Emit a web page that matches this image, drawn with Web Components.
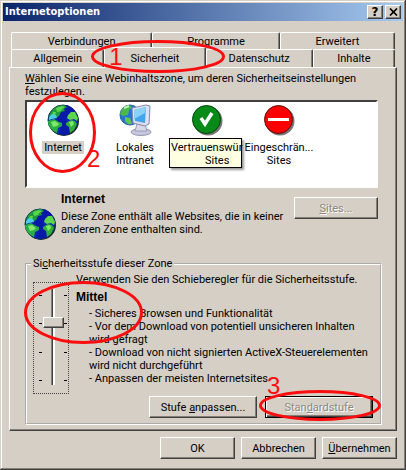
<!DOCTYPE html>
<html lang="de">
<head>
<meta charset="utf-8">
<title>Internetoptionen</title>
<style>
  body {
    margin: 0;
    --face: #d5cfc6;
    --light: #ffffff;
    --shadow: #848078;
    --dark: #404040;
    font: 11px/13px Roboto, "Liberation Sans", sans-serif;
    color: #000;
  }
</style>
</head>
<body>
<dialog-window heading="Internetoptionen">
  <tab-row>
    <tab-item style="--grow: 141">Verbindungen</tab-item>
    <tab-item style="--grow: 127">Programme</tab-item>
    <tab-item style="--grow: 115">Erweitert</tab-item>
  </tab-row>
  <tab-row>
    <tab-item style="--grow: 93">Allgemein</tab-item>
    <tab-item style="--grow: 101" selected>Sicherheit<ring-mark slot="mark" x="-13" y="-7" w="134" h="33" n="1" nx="4" ny="17"></ring-mark></tab-item>
    <tab-item style="--grow: 107">Datenschutz</tab-item>
    <tab-item style="--grow: 82">Inhalte</tab-item>
  </tab-row>
  <security-page></security-page>
  <push-button slot="actions">OK</push-button>
  <push-button slot="actions">Abbrechen</push-button>
  <push-button slot="actions"><u>Ü</u>bernehmen</push-button>
</dialog-window>

<script>
class DialogWindow extends HTMLElement {
  constructor() {
    super();
    this.attachShadow({ mode: "open" });
  }

  connectedCallback() {
    this.shadowRoot.innerHTML = `
      <style>
        :host {
          display: flex;
          flex-direction: column;
          box-sizing: border-box;
          min-height: 100vh;
          padding: 3px;
          background: var(--face);
          box-shadow: inset -1px -1px var(--dark), inset 1px 1px var(--face),
            inset -2px -2px var(--shadow), inset 2px 2px var(--light);
        }
        header {
          display: flex;
          align-items: center;
          gap: 2px;
          height: 18px;
          padding: 0 2px;
          background: linear-gradient(90deg, #0a246a, #a6caf0);
        }
        h1 {
          flex: 1;
          margin: 0;
          color: #fff;
          font: bold 11px/16px "DejaVu Sans Condensed", "DejaVu Sans", sans-serif;
        }
        header button {
          display: grid;
          place-items: center;
          width: 16px;
          height: 14px;
          padding: 0;
          border: 1px solid;
          border-color: var(--light) var(--dark) var(--dark) var(--light);
          background: var(--face);
          box-shadow: inset -1px -1px var(--shadow);
          font: bold 12px/12px "DejaVu Sans", sans-serif;
        }
        main { padding: 11px 6px 0; }
        footer {
          display: flex;
          justify-content: flex-end;
          gap: 6px;
          padding: 6px 6px 8px;
        }
      </style>
      <header>
        <h1>${this.getAttribute("heading")}</h1>
        <button aria-label="Hilfe">?</button>
        <button aria-label="Schließen">
          <svg width="9" height="8" viewBox="0 0 9 8"><path d="M1 0.5 8 7.5M8 0.5 1 7.5" stroke="#000" stroke-width="1.7"/></svg>
        </button>
      </header>
      <main><slot></slot></main>
      <footer><slot name="actions"></slot></footer>
    `;
  }
}
customElements.define("dialog-window", DialogWindow);

class TabRow extends HTMLElement {
  constructor() {
    super();
    this.attachShadow({ mode: "open" });
    this.shadowRoot.innerHTML = `
      <style>
        :host { display: flex; height: 17px; padding: 0 2px; }
        :host(:nth-of-type(2)) { height: 18px; }
      </style>
      <slot></slot>
    `;
  }
}
customElements.define("tab-row", TabRow);

class TabItem extends HTMLElement {
  constructor() {
    super();
    this.attachShadow({ mode: "open" });
    this.shadowRoot.innerHTML = `
      <style>
        :host { display: flex; flex: var(--grow) 1 0; position: relative; min-width: 0; }
        :host([selected]) { z-index: 2; margin-top: -2px; margin-bottom: -1px; }
        button {
          flex: 1;
          min-width: 0;
          padding: 0;
          border: 1px solid;
          border-color: var(--light) var(--dark) transparent var(--light);
          border-bottom: 0;
          border-radius: 2px 2px 0 0;
          background: var(--face);
          box-shadow: inset -1px 0 var(--shadow);
          color: inherit;
          font: inherit;
        }
      </style>
      <button role="tab"><slot></slot></button>
      <slot name="mark"></slot>
    `;
  }
}
customElements.define("tab-item", TabItem);

class PushButton extends HTMLElement {
  constructor() {
    super();
    this.attachShadow({ mode: "open" });
    const disabled = this.hasAttribute("disabled") ? "disabled" : "";
    this.shadowRoot.innerHTML = `
      <style>
        :host { display: block; position: relative; width: 75px; }
        button {
          display: block;
          width: 100%;
          height: 22px;
          padding: 0;
          border: 1px solid;
          border-color: var(--light) var(--dark) var(--dark) var(--light);
          background: var(--face);
          box-shadow: inset -1px -1px var(--shadow);
          color: inherit;
          font: inherit;
        }
        button:disabled { color: #8b877f; text-shadow: 1px 1px #fff; }
        :host([default]) button {
          border-color: #000;
          box-shadow: inset 1px 1px var(--light), inset -1px -1px var(--dark), inset -2px -2px var(--shadow);
        }
      </style>
      <button ${disabled}><slot></slot></button>
      <slot name="mark"></slot>
    `;
  }
}
customElements.define("push-button", PushButton);

// red ellipse with a step number, placed relative to its parent
class RingMark extends HTMLElement {
  constructor() {
    super();
    this.attachShadow({ mode: "open" });
  }

  connectedCallback() {
    const get = (name) => Number(this.getAttribute(name));
    const w = get("w");
    const h = get("h");
    const n = this.getAttribute("n");
    this.shadowRoot.innerHTML = `
      <style>
        :host {
          position: absolute;
          z-index: 5;
          left: ${get("x")}px;
          top: ${get("y")}px;
          pointer-events: none;
        }
        svg { display: block; overflow: visible; }
        span {
          position: absolute;
          left: ${get("nx") + 14}px;
          top: ${get("ny") - 12}px;
          color: #fb0d0d;
          font: 24px/24px "Liberation Sans", Arial, sans-serif;
        }
      </style>
      <svg width="${w}" height="${h}">
        <ellipse cx="${w / 2}" cy="${h / 2}" rx="${w / 2 - 1.5}" ry="${h / 2 - 1.5}" fill="none" stroke="#fb0d0d" stroke-width="3"/>
      </svg>
      ${n ? `<span>${n}</span>` : ""}
    `;
  }
}
customElements.define("ring-mark", RingMark);

const icons = {
  globe: `
    <circle cx="17" cy="17" r="15" fill="#222"/>
    <circle cx="16" cy="16" r="15" fill="#1026c4" stroke="#073a4c"/>
    <path d="M16 1c6 0 10 3 12 6l-5 3-4 5 3 6 1 8c-5 3-9 2-11 0l2-7-6-7 3-6z" fill="#0a1aa8"/>
    <path d="M6 5 11 2l6-1 3 2-3 2 1 2-4 1-2 4-3 2-3-1-4 3c0-4 1-8 4-11z" fill="#1f9c3c"/>
    <path d="M9 4l6-2 3 1-3 2-1 2-4 1zM6 8l3 0-1 4-3 0z" fill="#5ed64c"/>
    <path d="M2 13l3-3 4 1 1 3-5 1-3 1z" fill="#48cfe0"/>
    <path d="M1 17l6-2 5 3 3 1 0 3-4 2-1 5C5 27 1 22 1 17z" fill="#2ab040"/>
    <path d="M4 18l4-1 4 3-2 2-4 1z" fill="#83e86a"/>
    <path d="M21 11l3-3 4 0 3 6-1 3-3-2-4 1-3-2z" fill="#5cd64a"/>
    <path d="M19 19l5-3 4 1 2 3-3 6-4 3-1-6-3-2z" fill="#2fae3a"/>
    <path d="M22 18l4-1 1 3-3 3z" fill="#7cea62"/>`,
  intranet: `
    <circle cx="11" cy="11" r="10" fill="#2476cf" stroke="#2c62a0"/>
    <path d="M3 5l6-4 4 2-3 3-1 5-5 1-3-2z" fill="#4eb84b"/>
    <path d="M6 13l5 1 2 6-4 0-3-3z" fill="#65c64e"/>
    <path d="M5 4l5-2" stroke="#c4f2b0" stroke-width="2"/>
    <ellipse cx="22" cy="28" rx="10" ry="3.500" fill="#c6c7dc" stroke="#9698b4"/>
    <path d="M18 20h8l2 7H16z" fill="#d8d9e8" stroke="#9a9cb8"/>
    <path d="M13 4l14-3 4 1-1 18-4 2-12-3z" fill="#dfe1f2" stroke="#8488ac"/>
    <path d="M15 6l12-3-1 16-10-2z" fill="#42a5ee"/>
    <path d="M15 6l12-3-1 6-11 6z" fill="#8bd2fb"/>`,
  trusted: `
    <circle cx="17" cy="17" r="14.500" fill="#777"/>
    <circle cx="15.500" cy="15.500" r="14" fill="#078a17" stroke="#04420c"/>
    <path d="M10 14l4 6 7-11" fill="none" stroke="#fff" stroke-width="3.500"/>`,
  restricted: `
    <circle cx="17" cy="17" r="14.500" fill="#777"/>
    <circle cx="15.500" cy="15.500" r="14" fill="#fa0000" stroke="#5a1010"/>
    <path d="M5 15.500h21" stroke="#fff" stroke-width="3"/>`
};

class ZoneIcon extends HTMLElement {
  constructor() {
    super();
    this.attachShadow({ mode: "open" });
    this.shadowRoot.innerHTML = `
      <style>
        :host, svg { display: block; width: 33px; height: 33px; }
      </style>
      <svg viewBox="0 0 33 33" aria-hidden="true">${icons[this.getAttribute("name")]}</svg>
    `;
  }
}
customElements.define("zone-icon", ZoneIcon);

class ZoneItem extends HTMLElement {
  constructor() {
    super();
    this.attachShadow({ mode: "open" });
    this.shadowRoot.innerHTML = `
      <style>
        :host { display: block; position: relative; width: 72px; }
        button {
          display: flex;
          flex-direction: column;
          align-items: center;
          gap: 4px;
          width: 100%;
          padding: 0;
          border: 0;
          background: none;
          color: inherit;
          font: inherit;
          white-space: nowrap;
        }
        .label { padding: 0 2px; }
        :host([selected]) .label { background: var(--face); }
      </style>
      <button>
        <zone-icon name="${this.getAttribute("icon")}"></zone-icon>
        <span class="label"><slot></slot></span>
      </button>
      <slot name="over"></slot>
    `;
  }
}
customElements.define("zone-item", ZoneItem);

class LevelSlider extends HTMLElement {
  constructor() {
    super();
    this.attachShadow({ mode: "open" });
    this.shadowRoot.innerHTML = `
      <style>
        :host {
          display: flex;
          justify-content: space-between;
          box-sizing: border-box;
          width: 36px;
          height: 112px;
          padding: 6px 1px 8px 5px;
          border: 1px dotted #444;
        }
        .ticks {
          display: flex;
          flex-direction: column;
          justify-content: space-between;
          width: 3px;
          padding: 6px 0 4px;
        }
        .ticks i { height: 1px; background: #000; }
        input {
          appearance: none;
          writing-mode: vertical-lr;
          direction: rtl;
          width: 21px;
          height: 96px;
          margin: 0;
          background: linear-gradient(90deg, var(--shadow) 1px, var(--dark) 1px 2px, var(--light) 2px) center / 4px 100% no-repeat;
        }
        input::-webkit-slider-thumb {
          appearance: none;
          box-sizing: border-box;
          width: 21px;
          height: 11px;
          border: 1px solid;
          border-color: var(--light) var(--dark) var(--dark) var(--light);
          background: var(--face);
          box-shadow: inset -1px -1px var(--shadow);
        }
      </style>
      <div class="ticks"><i></i><i></i><i></i><i></i></div>
      <input type="range" min="0" max="3" value="2" aria-label="Sicherheitsstufe">
      <div class="ticks"><i></i><i></i><i></i><i></i></div>
    `;
  }
}
customElements.define("level-slider", LevelSlider);

class SecurityPage extends HTMLElement {
  constructor() {
    super();
    this.attachShadow({ mode: "open" });
    this.shadowRoot.innerHTML = `
      <style>
        :host {
          display: block;
          position: relative;
          padding: 4px 14px 5px 15px;
          border: 1px solid;
          border-color: var(--light) var(--dark) var(--dark) var(--light);
          box-shadow: inset -1px -1px var(--shadow);
        }
        p { margin: 0; }
        .zones {
          display: flex;
          box-sizing: border-box;
          height: 88px;
          margin: 2px 4px 0 0;
          padding: 2px 0;
          border: 2px solid;
          border-color: var(--dark) var(--light) var(--light) var(--dark);
          background: #fff;
        }
        .tip {
          position: absolute;
          z-index: 3;
          left: -2px;
          top: 34px;
          box-sizing: border-box;
          width: 73px;
          height: 30px;
          padding: 2px 1px;
          border: 1px solid #000;
          background: #ffffe1;
          box-shadow: 2px 2px 2px #0006;
        }
        .tip span { display: block; padding-left: 34px; }
        .info {
          display: flex;
          gap: 4px;
          box-sizing: border-box;
          height: 69px;
          padding-right: 4px;
        }
        .info zone-icon { margin: 20px 0 0 -1px; }
        .info div { flex: 1; padding-top: 5px; }
        .info p { margin-top: 4px; }
        .info push-button { width: 84px; margin-top: 9px; }
        b { display: block; font-family: "Liberation Sans", Arial, sans-serif; font-size: 12px; }
        fieldset {
          position: relative;
          min-width: 0;
          margin: 0;
          padding: 3px 7px 5px 6px;
          border: 2px groove #fff;
        }
        legend { padding: 0 2px; margin-left: -2px; }
        .level { display: flex; gap: 7px; }
        .level level-slider { margin-top: 9px; flex: none; }
        .level div { flex: 1; min-width: 0; }
        .level b { margin: 5px 0 3px; }
        .level ul { margin: 0; padding: 0 0 0 13px; list-style: none; }
        .buttons { display: flex; justify-content: flex-end; gap: 8px; margin-top: 2px; }
        .buttons push-button { width: 108px; }
      </style>
      <p><u>W</u>ählen Sie eine Webinhaltszone, um deren Sicherheitseinstellungen<br>festzulegen.</p>
      <div class="zones">
        <zone-item icon="globe" selected>Internet<ring-mark slot="over" x="2" y="-12" w="67" h="81" n="2" nx="44" ny="67"></ring-mark></zone-item>
        <zone-item icon="intranet">Lokales<br>Intranet</zone-item>
        <zone-item icon="trusted"><div class="tip" slot="over">Vertrauenswür<span>Sites</span></div></zone-item>
        <zone-item icon="restricted">Eingeschrän...<br>Sites</zone-item>
      </div>
      <div class="info">
        <zone-icon name="globe"></zone-icon>
        <div>
          <b>Internet</b>
          <p>Diese Zone enthält alle Websites, die in keiner<br>anderen Zone enthalten sind.</p>
        </div>
        <push-button disabled><u>S</u>ites...</push-button>
      </div>
      <fieldset>
        <legend>Si<u>c</u>herheitsstufe dieser Zone</legend>
        <div class="level">
          <level-slider></level-slider>
          <div>
            <p>Verwenden Sie den Schieberegler für die Sicherheitsstufe.</p>
            <b>Mittel</b>
            <ul>
              <li>- Sicheres Browsen und Funktionalität</li>
              <li>- Vor dem Download von potentiell unsicheren Inhalten<br>wird gefragt</li>
              <li>- Download von nicht signierten ActiveX-Steuerelementen<br>wird nicht durchgeführt</li>
              <li>- Anpassen der meisten Internetsites</li>
            </ul>
          </div>
        </div>
        <ring-mark x="-3" y="11" w="119" h="63"></ring-mark>
        <div class="buttons">
          <push-button>Stufe <u>a</u>npassen...</push-button>
          <push-button disabled default>Stan<u>d</u>ardstufe<ring-mark slot="mark" x="-6" y="-6" w="122" h="31" n="3" nx="-6" ny="-4"></ring-mark></push-button>
        </div>
      </fieldset>
    `;
  }
}
customElements.define("security-page", SecurityPage);
</script>
</body>
</html>
